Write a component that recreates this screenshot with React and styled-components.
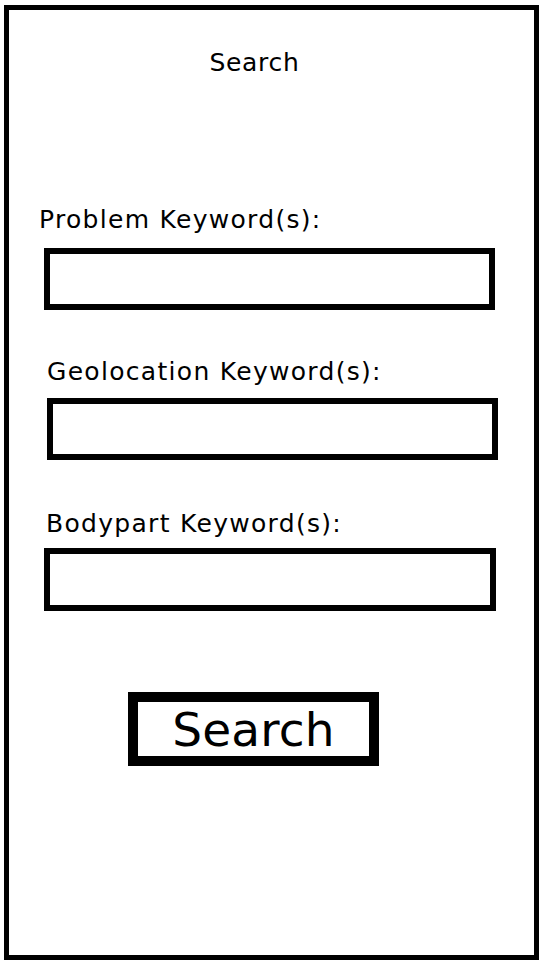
import React from "react";
import styled, { createGlobalStyle } from "styled-components";

const Global = createGlobalStyle`
  html, body { margin: 0; padding: 0; background: #fff; }
  body { font-family: "DejaVu Sans", Verdana, sans-serif; color: #000; }
  * { box-sizing: border-box; }
`;

const Frame = styled.div`
  margin: 5px 0 0 4px;
  width: 535px;
  height: 955px;
  border: 5px solid #000;
  display: flex;
  flex-direction: column;
  overflow: hidden;
`;

const Title = styled.h1`
  margin: 40px 0 0 0;
  padding-right: 34px;
  font-size: 25px;
  line-height: 25px;
  letter-spacing: 0.7px;
  font-weight: normal;
  text-align: center;
`;

const Form = styled.form`
  display: flex;
  flex-direction: column;
  margin-top: 132px;
`;

const Field = styled.div`
  display: flex;
  flex-direction: column;
  margin-top: ${(p) => p.$top}px;
`;

const Label = styled.label`
  margin-left: ${(p) => p.$x - 9}px;
  font-size: 25px;
  line-height: 25px;
  letter-spacing: 1.3px;
`;

const Input = styled.input`
  margin-top: ${(p) => p.$gap}px;
  margin-left: ${(p) => p.$x - 9}px;
  width: ${(p) => p.$w}px;
  height: ${(p) => p.$h}px;
  border: 6px solid #000;
  border-radius: 0;
  background: #fff;
  outline: none;
  padding: 0 8px;
  font: inherit;
`;

const Button = styled.button`
  align-self: flex-start;
  margin: 81px 0 0 ${128 - 9}px;
  width: 251px;
  height: 74px;
  border: 10px solid #000;
  background: #fff;
  border-radius: 0;
  padding: 0;
  font-family: "DejaVu Sans", Verdana, sans-serif;
  font-size: 47px;
  line-height: 47px;
  letter-spacing: 0.2px;
  color: #000;
  display: flex;
  align-items: center;
  justify-content: center;
`;

const fields = [
  { id: "problem", label: "Problem Keyword(s):", top: 0, lx: 39, gap: 16, ix: 44, w: 451, h: 62 },
  { id: "geo", label: "Geolocation Keyword(s):", top: 49, lx: 47, gap: 14, ix: 47, w: 451, h: 62 },
  { id: "body", label: "Bodypart Keyword(s):", top: 51, lx: 46, gap: 12, ix: 44, w: 452, h: 63 },
];

export default function App() {
  return (
    <>
      <Global />
      <Frame>
        <Title>Search</Title>
        <Form onSubmit={(e) => e.preventDefault()}>
          {fields.map((f) => (
            <Field key={f.id} $top={f.top}>
              <Label htmlFor={f.id} $x={f.lx}>{f.label}</Label>
              <Input id={f.id} $gap={f.gap} $x={f.ix} $w={f.w} $h={f.h} />
            </Field>
          ))}
          <Button type="submit">Search</Button>
        </Form>
      </Frame>
    </>
  );
}
